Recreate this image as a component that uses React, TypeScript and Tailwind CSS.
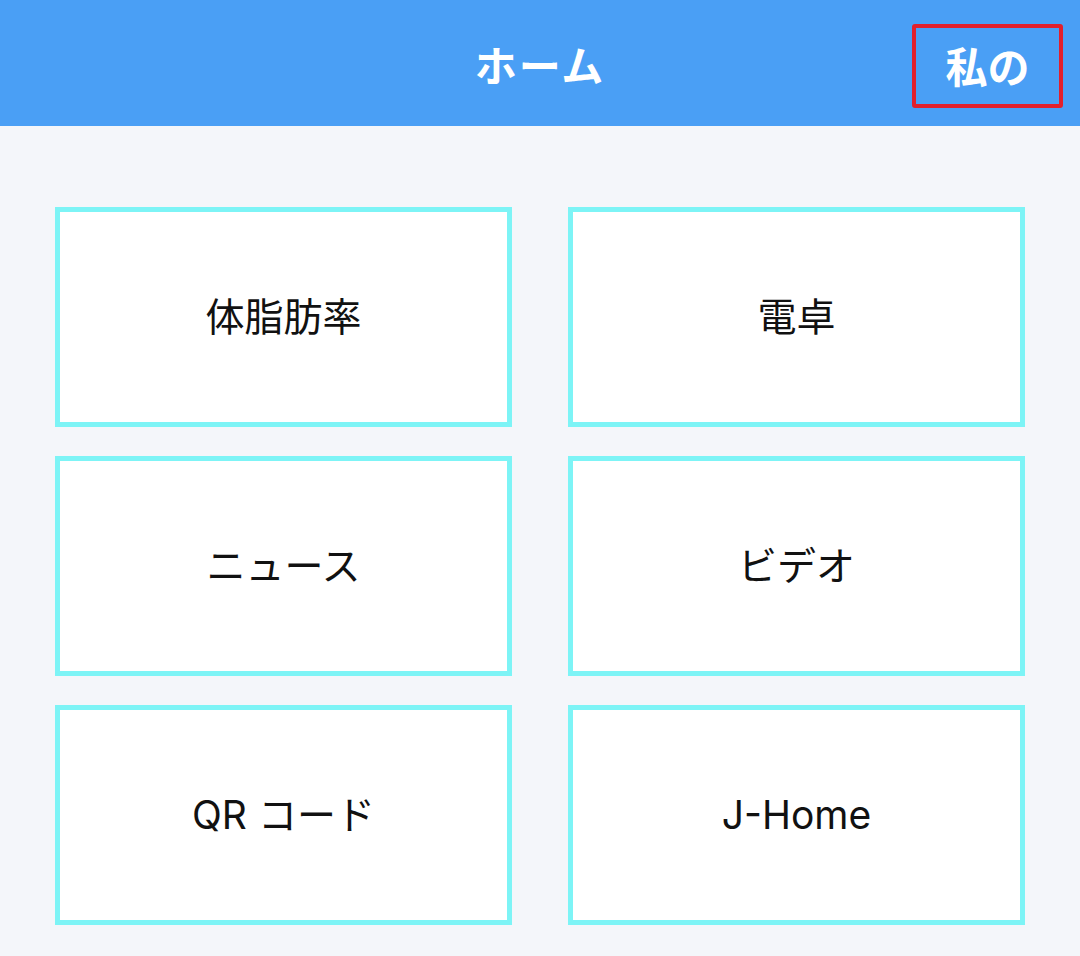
const items = ["体脂肪率", "電卓", "ニュース", "ビデオ", "QR コード", "J-Home"]

export default function App() {
  return (
    <div className="min-h-[956px] bg-[#f4f6fa] font-['Inter','Noto_Sans_CJK_JP',sans-serif]">
      <header className="h-[126px] pt-[6px] bg-[#4a9ff5] grid grid-cols-[1fr_auto_1fr] items-center">
        <div />
        <h1 className="text-[42px] font-bold text-white tracking-[2px]">ホーム</h1>
        <div className="flex justify-end pr-[17px]">
          <button className="w-[151px] h-[84px] border-[4px] border-[#e21f2c] rounded-[3px] text-white text-[42px] font-bold flex items-center justify-center pt-[2px]">
            私の
          </button>
        </div>
      </header>

      <div className="grid grid-cols-2 gap-x-[56px] gap-y-[29px] pt-[81px] px-[55px]">
        {items.map((t) => (
          <div
            key={t}
            className="h-[220px] bg-white border-[5px] border-[#7df4f6] flex items-center justify-center text-[39px] text-[#111]"
          >
            {t}
          </div>
        ))}
      </div>
    </div>
  )
}
